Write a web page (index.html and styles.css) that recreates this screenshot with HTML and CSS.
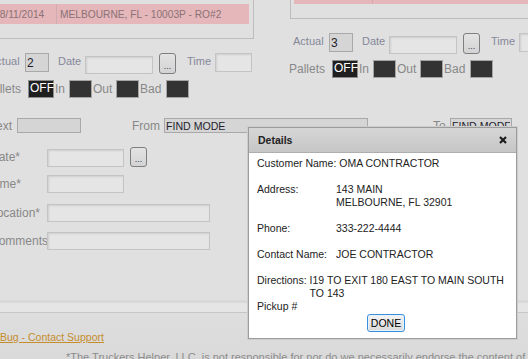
FILE: index.html
```html
<!DOCTYPE html>
<html lang="en">
<head>
    <meta charset="UTF-8">
    <meta name="viewport" content="width=device-width, initial-scale=1.0">
    <title>Pickup Details</title>
    <link rel="stylesheet" href="styles.css">
</head>
<body>
    <div class="page">
        <div class="top">
            <div class="panel">
                <div class="grid">
                    <div class="grid-row">
                        <div class="cell date-cell">08/11/2014</div>
                        <div class="cell">MELBOURNE, FL - 10003P - RO#2</div>
                    </div>
                </div>
                <div class="line actual-line">
                    <span class="lbl lbl-actual">Actual</span>
                    <input class="count" type="text" value="2">
                    <span class="lbl lbl-date">Date</span>
                    <input class="soft date-in" type="text">
                    <button class="pick">...</button>
                    <span class="lbl lbl-time">Time</span>
                    <input class="soft time-in" type="text">
                </div>
                <div class="line pallet-line">
                    <span class="plbl plbl-pallets">Pallets</span>
                    <span class="toggle">OFF</span>
                    <span class="plbl plbl-in">In</span>
                    <span class="dark"></span>
                    <span class="plbl plbl-out">Out</span>
                    <span class="dark"></span>
                    <span class="plbl plbl-bad">Bad</span>
                    <span class="dark"></span>
                </div>
            </div>
            <div class="panel panel-right">
                <div class="grid">
                    <div class="grid-row">
                        <div class="cell date-cell wide">08/12/2014</div>
                        <div class="cell">MELBOURNE, FL</div>
                    </div>
                </div>
                <div class="line actual-line">
                    <span class="lbl lbl-actual">Actual</span>
                    <input class="count" type="text" value="3">
                    <span class="lbl lbl-date">Date</span>
                    <input class="soft date-in" type="text">
                    <button class="pick">...</button>
                    <span class="lbl lbl-time">Time</span>
                    <input class="soft time-in" type="text">
                </div>
                <div class="line pallet-line">
                    <span class="plbl plbl-pallets">Pallets</span>
                    <span class="toggle">OFF</span>
                    <span class="plbl plbl-in">In</span>
                    <span class="dark"></span>
                    <span class="plbl plbl-out">Out</span>
                    <span class="dark"></span>
                    <span class="plbl plbl-bad">Bad</span>
                    <span class="dark"></span>
                </div>
            </div>
        </div>

        <div class="filter-line">
            <span class="flbl flbl-text">Text</span>
            <input class="ro text-in" type="text">
            <span class="flbl flbl-from">From</span>
            <input class="ro from-in" type="text" value="FIND MODE">
            <span class="flbl flbl-to">To</span>
            <input class="ro to-in" type="text" value="FIND MODE">
        </div>

        <div class="field field-date">
            <span class="flabel">Date*</span>
            <input class="soft short-in" type="text">
            <button class="pick">...</button>
        </div>
        <div class="field field-time">
            <span class="flabel">Time*</span>
            <input class="soft short-in" type="text">
        </div>
        <div class="field field-loc">
            <span class="flabel">Location*</span>
            <input class="soft long-in" type="text">
        </div>
        <div class="field field-com">
            <span class="flabel">Comments</span>
            <input class="soft long-in" type="text">
        </div>

        <div class="footer">
            <div class="band"></div>
            <div class="bottom">
                <a class="support" href="#">Bug - Contact Support</a>
                <p class="disclaimer">*The Truckers Helper, LLC. is not responsible for nor do we necessarily endorse the content of any other site</p>
            </div>
        </div>
    </div>

    <div class="dialog">
        <div class="dialog-head">
            <span>Details</span>
            <svg class="close" width="8" height="8" viewBox="0 0 8 8">
                <path d="M1 1 L7 7 M7 1 L1 7" stroke="#1c1c1c" stroke-width="2.2" fill="none"/>
            </svg>
        </div>
        <div class="dialog-body">
            <div class="d-row spaced">Customer Name: OMA CONTRACTOR</div>
            <div class="d-row spaced">
                <span class="d-label">Address:</span>
                <span>143 MAIN<br>MELBOURNE, FL 32901</span>
            </div>
            <div class="d-row spaced">
                <span class="d-label">Phone:</span>
                <span>333-222-4444</span>
            </div>
            <div class="d-row spaced">
                <span class="d-label">Contact Name:</span>
                <span>JOE CONTRACTOR</span>
            </div>
            <div class="d-row">
                <span>Directions:</span>
                <span class="d-dir">I19 TO EXIT 180 EAST TO MAIN SOUTH TO 143</span>
            </div>
            <div class="d-row">Pickup #</div>
            <div class="d-actions">
                <button class="done">DONE</button>
            </div>
        </div>
    </div>
</body>
</html>
```

FILE: styles.css
```css
body {
    margin: 0;
    width: 528px;
    height: 359px;
    overflow: hidden;
    background: #e0e0e0;
    font-family: 'Liberation Sans', Arial, sans-serif;
    color: #888;
}
input, button {
    font-family: 'Liberation Sans', Arial, sans-serif;
    box-sizing: border-box;
    margin: 0;
    outline: none;
}
.page {
    margin-left: -14px;
    width: 560px;
}
.top {
    display: flex;
    gap: 36px;
}
.panel {
    width: 268px;
    flex: none;
}

/* grid of stops */
.grid {
    border: 1px solid #bdbdbd;
    border-top: none;
    padding: 4px 0 14px;
}
.grid-row {
    display: flex;
    height: 20px;
    margin: 0 4px 0 3px;
    background: #e5b7ba;
    font-size: 10.2px;
    color: #8a7276;
}
.panel-right .grid-row {
    margin-top: -20px;
}
.cell {
    display: flex;
    align-items: center;
    padding-left: 3px;
    white-space: nowrap;
}
.date-cell {
    width: 67px;
    flex: none;
    box-sizing: border-box;
    padding-left: 4px;
    border-right: 1px solid #cfacaf;
}
.date-cell.wide {
    width: 79px;
}

/* actual / pallets lines */
.line {
    display: flex;
    align-items: center;
}
.actual-line {
    height: 21px;
    margin-top: 14px;
    margin-left: 3px;
}
.lbl {
    font-size: 11px;
    color: #858899;
    flex: none;
    align-self: flex-start;
    margin-top: 2px;
}
.lbl-actual { width: 36px; }
.lbl-date { width: 27px; margin-left: 9px; }
.lbl-time { width: 28px; margin-left: 11px; }
.count {
    width: 24px;
    height: 19px;
    align-self: flex-start;
    border: 1px solid #a9a9a9;
    background: #d5d5d5;
    padding: 0 1px;
    font-size: 12px;
    color: #1e1e2e;
}
.soft {
    border: 1px solid #c4c4c4;
    background: #e5e5e5;
    box-shadow: inset 1px 1px 2px rgba(0, 0, 0, 0.1);
}
.date-in {
    width: 68px;
    height: 18px;
    align-self: flex-end;
}
.time-in {
    width: 37px;
    height: 19px;
    align-self: flex-start;
}
.pick {
    width: 17px;
    height: 21px;
    margin-left: 6px;
    padding: 0 0 2px;
    border: 1px solid #7f7f7f;
    border-radius: 3px;
    background: linear-gradient(#e3e3e3, #d3d3d3);
    font-size: 9px;
    line-height: 9px;
    color: #3a3a5a;
    display: flex;
    align-items: flex-end;
    justify-content: center;
}
.pallet-line {
    height: 18px;
    margin-top: 6px;
    margin-left: -1px;
}
.plbl {
    font-size: 12px;
    color: #888;
    flex: none;
    box-sizing: border-box;
}
.plbl-pallets { width: 43px; }
.plbl-in { width: 15px; padding-left: 1px; }
.plbl-out { width: 24px; padding-left: 1px; }
.plbl-bad { width: 27px; padding-left: 1px; }
.toggle {
    width: 26px;
    height: 18px;
    box-sizing: border-box;
    border: 1px solid #8c8c8c;
    background: #1f1f1f;
    color: #fff;
    font-size: 12px;
    line-height: 14px;
    padding-left: 1px;
    flex: none;
}
.dark {
    width: 23px;
    height: 18px;
    box-sizing: border-box;
    border: 1px solid #a5a5a5;
    background: #333;
    flex: none;
}

/* lower form */
.filter-line {
    display: flex;
    align-items: center;
    height: 15px;
    margin-top: 20px;
}
.flbl {
    font-size: 12px;
    color: #888;
    flex: none;
}
.flbl-text { width: 27px; margin-left: 4px; }
.flbl-from { width: 32px; margin-left: 51px; }
.flbl-to { width: 17px; margin-left: 65px; }
.ro {
    height: 15px;
    border: 1px solid #a9a9a9;
    background: #d5d5d5;
    padding: 0 1px;
    font-size: 10.6px;
    color: #1e1e2e;
}
.text-in { width: 64px; }
.from-in { width: 204px; }
.to-in { width: 62px; }

.field {
    display: flex;
    align-items: center;
    height: 18px;
}
.flabel {
    width: 61px;
    flex: none;
    box-sizing: border-box;
    padding-left: 4px;
    font-size: 12px;
    color: #888;
    white-space: nowrap;
}
.field-date {
    height: 20px;
    margin-top: 14px;
}
.field-date .short-in {
    align-self: flex-end;
}
.field-date .pick {
    height: 20px;
}
.field-time { margin-top: 8px; }
.field-loc { margin-top: 11px; }
.field-com { margin-top: 10px; }
.short-in {
    width: 77px;
    height: 18px;
}
.long-in {
    width: 163px;
    height: 18px;
}

/* footer */
.footer {
    margin-top: 50px;
    border-top: 3px solid #d8d8d8;
}
.band {
    height: 9px;
    background: #e5e5e5;
    border-bottom: 1px solid #c6c6c6;
}
.bottom {
    height: 60px;
    padding: 17px 0 0 14px;
    background: linear-gradient(#dedede, #d6d6d6);
}
.support {
    display: block;
    font-size: 10.5px;
    line-height: 14px;
    color: #c58d2c;
}
.disclaimer {
    margin: 7px 0 0 66px;
    font-size: 11px;
    white-space: nowrap;
    color: #8c8c8c;
}

/* details dialog */
.dialog {
    position: absolute;
    left: 248px;
    top: 127px;
    width: 269px;
    height: 212px;
    box-sizing: border-box;
    border: 1px solid #9c9c9c;
    background: #fff;
    box-shadow: 0 0 0 1px #cdcdcd;
    color: #222;
}
.dialog-head {
    height: 25px;
    box-sizing: border-box;
    display: flex;
    align-items: center;
    justify-content: space-between;
    padding: 0 9px;
    background: linear-gradient(#d6d6d6, #c6c6c6);
    border-bottom: 1px solid #aeaeae;
    font-size: 10.5px;
    font-weight: bold;
    color: #222;
}
.dialog-body {
    padding: 4px 8px 0;
    font-size: 10.5px;
    line-height: 13px;
}
.d-row {
    display: flex;
}
.d-row.spaced {
    margin-bottom: 13px;
}
.d-label {
    width: 79px;
    flex: none;
}
.d-dir {
    width: 198px;
    margin-left: 3px;
}
.d-actions {
    text-align: center;
    padding-left: 7px;
    margin-top: 1px;
}
.done {
    width: 38px;
    height: 18px;
    padding: 0;
    border: 1px solid #3b8ede;
    border-radius: 3px;
    background: linear-gradient(#f4f4f4, #d9d9d9);
    box-shadow: inset 0 0 0 1px #e8f2fb;
    font-size: 10.5px;
    color: #000;
}
```
